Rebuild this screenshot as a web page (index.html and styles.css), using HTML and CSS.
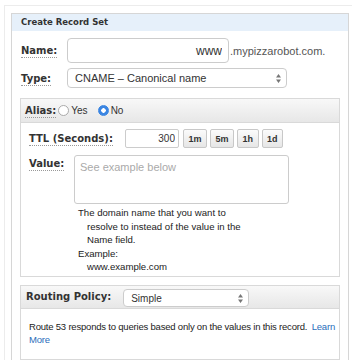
FILE: index.html
```html
<!DOCTYPE html>
<html lang="en">
<head>
    <meta charset="UTF-8">
    <meta name="viewport" content="width=device-width, initial-scale=1.0">
    <title>Create Record Set</title>
    <link rel="stylesheet" href="styles.css">
</head>
<body>
    <div class="frame">
        <div class="panel">
            <div class="panel-head">Create Record Set</div>
            <div class="panel-body">
                <div class="row">
                    <span class="label name-label"><span class="tip">Name:</span></span>
                    <input type="text" class="field name-field" value="www">
                    <span class="domain">.mypizzarobot.com.</span>
                </div>
                <div class="row type-row">
                    <span class="label name-label"><span class="tip">Type:</span></span>
                    <div class="select type-select">
                        <span>CNAME – Canonical name</span>
                        <svg class="arrows" width="5" height="9" viewBox="0 0 5 9">
                            <path d="M2.5 0 L5 3.5 L0 3.5 Z M0 5.5 L5 5.5 L2.5 9 Z" fill="#777"/>
                        </svg>
                    </div>
                </div>

                <div class="box alias-box">
                    <div class="box-head">
                        <span class="label"><span class="tip">Alias:</span></span>
                        <label class="radio"><span class="dot"></span>Yes</label>
                        <label class="radio checked"><span class="dot"></span>No</label>
                    </div>
                    <div class="box-body">
                        <div class="ttl-row">
                            <span class="label ttl-label"><span class="tip">TTL (Seconds):</span></span>
                            <input type="text" class="field ttl-field" value="300">
                            <button class="ttl-btn">1m</button>
                            <button class="ttl-btn">5m</button>
                            <button class="ttl-btn">1h</button>
                            <button class="ttl-btn">1d</button>
                        </div>
                        <div class="value-row">
                            <span class="label value-label"><span class="tip">Value:</span></span>
                            <textarea class="value-field" placeholder="See example below"></textarea>
                        </div>
                        <div class="help">
                            <p>The domain name that you want to resolve to instead of the value in the Name field.</p>
                            <p>Example:</p>
                            <p class="sample">www.example.com</p>
                        </div>
                    </div>
                </div>

                <div class="box routing-box">
                    <div class="box-head routing-head">
                        <span class="label">Routing Policy:</span>
                        <div class="select routing-select">
                            <span>Simple</span>
                            <svg class="arrows" width="5" height="9" viewBox="0 0 5 9">
                                <path d="M2.5 0 L5 3.5 L0 3.5 Z M0 5.5 L5 5.5 L2.5 9 Z" fill="#777"/>
                            </svg>
                        </div>
                    </div>
                    <div class="box-body routing-body">
                        Route 53 responds to queries based only on the values in this record. <a href="#">Learn More</a>
                    </div>
                </div>
            </div>
        </div>
    </div>
</body>
</html>
```

FILE: styles.css
```css
html, body {
    overflow: hidden;
}

body {
    margin: 0;
    background: white;
    color: #333;
    font-family: "Liberation Sans", Arial, sans-serif;
    font-size: 10px;
}

.frame {
    margin: 5px 0 0 4px;
    width: 348px;
    height: 400px;
    padding: 7px 0 0 6px;
    box-sizing: border-box;
    border: 1px solid #ececec;
    border-right: none;
}

.panel {
    width: 338px;
    height: 400px;
    border: 1px solid #d6d6d6;
    box-sizing: border-box;
}

.panel-head {
    height: 17px;
    line-height: 17px;
    padding-left: 9px;
    background-color: #e6f0fa;
    font-family: "DejaVu Sans", Verdana, sans-serif;
    font-weight: bold;
    font-size: 8.5px;
    color: #333;
}

.panel-body {
    padding: 7px 8px 0 8px;
}

.label {
    font-family: "DejaVu Sans", Verdana, sans-serif;
    font-weight: bold;
    font-size: 10px;
    color: #333;
}

.tip {
    border-bottom: 1px dotted #999;
    padding-bottom: 1px;
}

.row {
    display: flex;
    align-items: center;
    height: 25px;
}

.name-label {
    width: 47px;
    padding-left: 1px;
    box-sizing: border-box;
}

.field {
    box-sizing: border-box;
    border: 1px solid #ccc;
    border-radius: 4px;
    font-family: "Liberation Sans", Arial, sans-serif;
    color: #333;
    text-align: right;
    outline: none;
    margin: 0;
}

.name-field {
    width: 162px;
    height: 25px;
    padding: 0 6px;
    font-size: 12px;
}

.domain {
    margin-left: 1px;
    font-size: 11px;
    color: #555;
}

.type-row {
    margin-top: 5px;
    height: 20px;
}

.select {
    display: flex;
    align-items: center;
    justify-content: space-between;
    box-sizing: border-box;
    border: 1px solid #ccc;
    border-radius: 4px;
    background: white;
    color: #333;
}

.type-select {
    width: 220px;
    height: 20px;
    padding: 0 5px 0 7px;
    font-size: 11px;
}

.box {
    width: 320px;
    box-sizing: border-box;
    border: 1px solid #d9d9d9;
}

.alias-box {
    margin-top: 10px;
}

.box-head {
    display: flex;
    align-items: center;
    height: 24px;
    padding-left: 4px;
    background: linear-gradient(#f8f8f8, #e7e7e7);
    border-bottom: 1px solid #d9d9d9;
    box-sizing: border-box;
}

.radio {
    display: flex;
    align-items: center;
    font-size: 10px;
    color: #333;
}

.radio .dot {
    width: 9px;
    height: 9px;
    margin: 0 2px 0 2px;
    border: 1px solid #aaa;
    border-radius: 50%;
    background: white;
}

.radio + .radio {
    margin-left: 8px;
}

.radio.checked .dot {
    border-color: #3a85e2;
    background: radial-gradient(circle, white 0 2px, #3a85e2 2.5px);
}

.box-body {
    padding: 6px 8px 2px 8px;
}

.ttl-row {
    display: flex;
    align-items: center;
    height: 19px;
}

.ttl-label {
    width: 96px;
}

.ttl-field {
    width: 54px;
    height: 19px;
    padding: 0 3px;
    font-size: 10px;
    border-radius: 2px;
}

.ttl-btn {
    height: 19px;
    margin: 0 0 0 3px;
    padding: 0 4.5px;
    border: 1px solid #c8c8c8;
    border-radius: 2px;
    background: linear-gradient(#fbfbfb, #e6e6e6);
    font-family: "Liberation Sans", Arial, sans-serif;
    font-weight: bold;
    font-size: 9px;
    color: #333;
}

.ttl-field + .ttl-btn {
    margin-left: 4px;
}

.value-row {
    display: flex;
    align-items: flex-start;
    margin-top: 7px;
}

.value-label {
    width: 45px;
    margin-top: 3px;
}

.value-field {
    width: 215px;
    height: 49px;
    box-sizing: border-box;
    margin: 0;
    padding: 5px;
    border: 1px solid #ccc;
    border-radius: 3px;
    resize: none;
    font-family: "Liberation Sans", Arial, sans-serif;
    font-size: 11px;
    outline: none;
}

.value-field::placeholder {
    color: #aaa;
}

.help {
    width: 175px;
    margin: 2px 0 0 49px;
    font-size: 9.6px;
    line-height: 13.5px;
    color: #222;
}

.help p {
    margin: 0;
    padding-left: 9px;
    text-indent: -9px;
}

.help .sample {
    text-indent: 0;
}

.routing-box {
    margin-top: 8px;
}

.routing-head {
    height: 23px;
    padding-left: 5px;
}

.routing-select {
    width: 126px;
    height: 18px;
    margin: 3px 0 0 12px;
    padding: 0 5px 0 7px;
    font-size: 10px;
}

.routing-body {
    padding: 11px 2px 13px 8px;
    font-size: 9.5px;
    letter-spacing: -0.2px;
    line-height: 13px;
    color: #222;
}

.routing-body a {
    margin-left: 2px;
    color: #2a6ebb;
    text-decoration: none;
}
```
